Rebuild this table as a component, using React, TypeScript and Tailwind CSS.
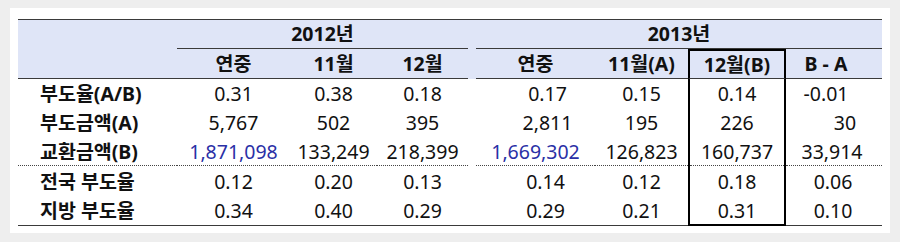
import { Fragment } from 'react'

const cols = [
  { w: 'w-[113px]', box: false },
  { w: 'w-[87px]', box: false },
  { w: 'w-[91px]', box: false },
  { w: 'w-[119px]', box: false },
  { w: 'w-[93px]', box: false },
  { w: 'w-[98px]', box: true },
  { w: 'w-[96px]', box: false },
]

const heads = ['연중', '11월', '12월', '연중', '11월(A)', '12월(B)', 'B - A']

const rows = [
  ['부도율(A/B)', '0.31', '0.38', '0.18', '0.17', '0.15', '0.14', '-0.01'],
  ['부도금액(A)', '5,767', '502', '395', '2,811', '195', '226', '30'],
  ['교환금액(B)', '1,871,098', '133,249', '218,399', '1,669,302', '126,823', '160,737', '33,914'],
  ['전국 부도율', '0.12', '0.20', '0.13', '0.14', '0.12', '0.18', '0.06'],
  ['지방 부도율', '0.34', '0.40', '0.29', '0.29', '0.21', '0.31', '0.10'],
]

// small nudges so numbers sit where the sheet put them
const nudge: Record<string, string> = {
  '0-4': 'pl-[24px]',
  '1-4': 'pl-[24px]',
  '3-4': 'pl-[20px]',
  '4-4': 'pl-[20px]',
  '0-7': 'pr-[16px]',
  '1-7': 'pl-[22px]',
  '2-7': 'pr-[4px]',
  '3-7': 'pr-[2px]',
  '4-7': 'pr-[2px]',
}

const blue = new Set(['2-1', '2-4'])

export default function App() {
  return (
    <div className="w-[900px] h-[242px] bg-[#eeeeee] pt-[8px] pl-[10px] font-['Noto_Sans','Noto_Sans_CJK_KR',sans-serif] text-[19.5px] text-[#111]">
      <div className="w-[880px] h-[225px] bg-white pt-[11px] pl-[8px]">
        <div className="w-[864px] border-t border-[#3a3a3a]">
          <div className="bg-[#dfe5f7] font-bold">
            <div className="flex h-[29px]">
              <div className="w-[159px]" />
              <div className="w-[291px] border-b border-[#3a3a3a] flex items-center justify-center">2012년</div>
              <div className="w-[8px]" />
              <div className="w-[406px] border-b border-[#3a3a3a] flex items-center justify-center">2013년</div>
            </div>
            <div className="flex h-[30px]">
              <div className="w-[159px] border-b border-[#3a3a3a]" />
              {heads.map((h, i) => (
                <Head key={i} idx={i} label={h} />
              ))}
            </div>
          </div>
          {rows.map((r, ri) => (
            <Row key={ri} row={r} ri={ri} />
          ))}
        </div>
      </div>
    </div>
  )
}

function Head({ idx, label }: { idx: number; label: string }) {
  const c = cols[idx]
  return (
    <>
      {idx === 3 && <div className="w-[8px]" />}
      <div
        className={`${c.w} border-b border-b-[#3a3a3a] flex items-center justify-center ${
          c.box ? 'border-x-2 border-t-2 border-x-black border-t-black' : ''
        } ${idx === 6 ? 'pr-[16px]' : ''}`}
      >
        {label}
      </div>
    </>
  )
}

function Row({ row, ri }: { row: string[]; ri: number }) {
  const dotted = ri === 2
  const last = ri === 4
  const h = ri < 3 ? 'h-[29px]' : 'h-[30px]'
  const line = dotted ? 'border-b border-dotted border-b-[#444]' : last ? 'border-b border-b-[#3a3a3a]' : ''
  return (
    <div className={`flex ${h}`}>
      <div className={`w-[159px] pl-[22px] pt-[1px] font-bold flex items-center ${line}`}>{row[0]}</div>
      {row.slice(1).map((v, i) => {
        const c = cols[i]
        const key = `${ri}-${i + 1}`
        const text = `flex items-center justify-center pt-[1px] ${nudge[key] || ''} ${blue.has(key) ? 'text-[#2a30a6]' : ''}`
        return (
          <Fragment key={key}>
            {i === 3 && <div className={`w-[8px] ${last ? line : ''}`} />}
            {c.box ? (
              <div className={`${c.w} border-x-2 border-black ${last ? 'border-b-2' : ''}`}>
                <div className={`h-full ${text} ${last ? '' : line}`}>{v}</div>
              </div>
            ) : (
              <div className={`${c.w} ${text} ${line}`}>{v}</div>
            )}
          </Fragment>
        )
      })}
    </div>
  )
}
